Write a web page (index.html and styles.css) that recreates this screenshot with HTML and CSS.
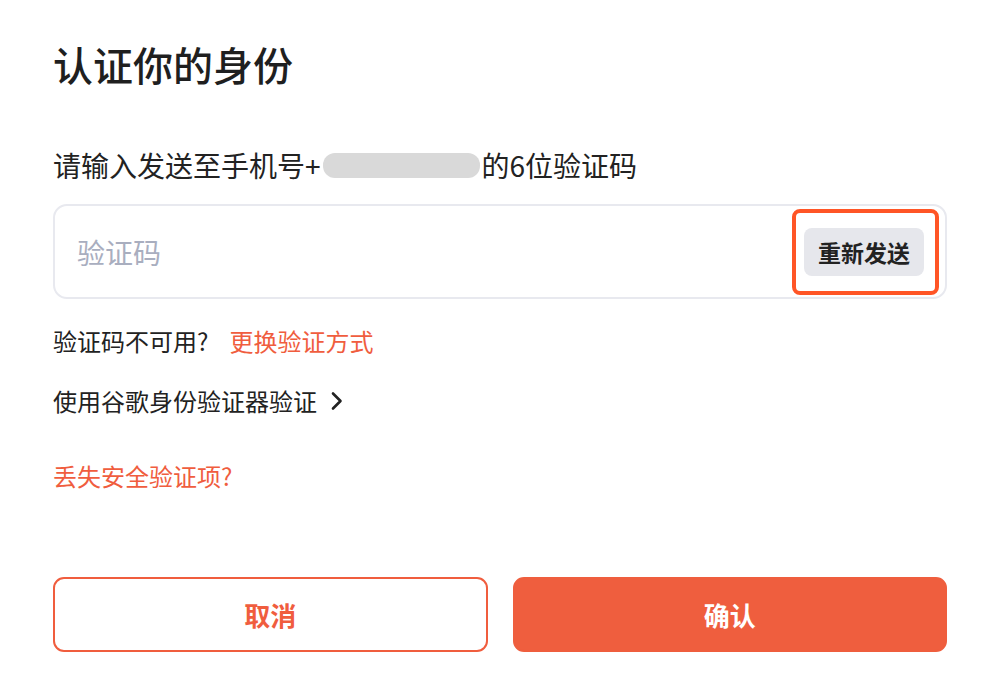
FILE: index.html
```html
<!DOCTYPE html>
<html lang="zh-CN">
<head>
  <meta charset="UTF-8">
  <meta name="viewport" content="width=device-width, initial-scale=1.0">
  <title>认证你的身份</title>
  <link rel="stylesheet" href="styles.css">
</head>
<body>
<div class="container">
  <h2 class="title">认证你的身份</h2>

  <p class="hint">请输入发送至手机号+<span class="masked"></span>的6位验证码</p>

  <div class="code-box">
    <input type="text" class="code-input" placeholder="验证码" maxlength="6">
    <span class="resend-mark">
      <button class="resend">重新发送</button>
    </span>
  </div>

  <p class="row">验证码不可用?<a href="#" class="link switch">更换验证方式</a></p>

  <p class="row google">使用谷歌身份验证器验证
    <svg class="chevron" width="14" height="20" viewBox="0 0 14 20">
      <path d="M3 2.5 L10.5 10 L3 17.5" fill="none" stroke="#222" stroke-width="2.6" stroke-linecap="round" stroke-linejoin="round"/>
    </svg>
  </p>

  <p class="row lost"><a href="#" class="link">丢失安全验证项?</a></p>

  <div class="actions">
    <button class="btn btn-cancel">取消</button>
    <button class="btn btn-ok">确认</button>
  </div>
</div>
</body>
</html>
```

FILE: styles.css
```css
body {
    margin: 0;
    background-color: #ffffff;
    font-family: "Noto Sans CJK SC", "Noto Sans", sans-serif;
    color: #222222;
}

.container {
    width: 894px;
    padding: 40px 53px 0;
}

.title {
    margin: 0;
    font-size: 40px;
    line-height: 48px;
    font-weight: 500;
    color: #1f1f1f;
}

.hint {
    margin: 59px 0 0;
    font-size: 28px;
    line-height: 36px;
    display: flex;
    align-items: center;
}

.masked {
    display: inline-block;
    width: 157px;
    height: 25px;
    border-radius: 12px;
    background-color: #d9d9d9;
    margin: 0 2px 0 2px;
}

.code-box {
    margin-top: 21px;
    height: 95px;
    box-sizing: border-box;
    border: 2px solid #e8e9ef;
    border-radius: 14px;
    display: flex;
    align-items: center;
    padding: 0 6px 0 22px;
}

.code-input {
    flex: 1;
    border: none;
    outline: none;
    font-family: inherit;
    font-size: 28px;
    color: #222222;
    background: transparent;
    padding: 0;
}

.code-input::placeholder {
    color: #a9aebf;
}

.resend-mark {
    border: 4px solid #ff5526;
    border-radius: 8px;
    padding: 15px 11px 15px 8px;
    display: flex;
}

.resend {
    width: 120px;
    height: 48px;
    border: none;
    border-radius: 8px;
    background-color: #e6e7ec;
    font-family: inherit;
    font-size: 23px;
    font-weight: 700;
    color: #222222;
    padding: 0;
    cursor: pointer;
}

.row {
    margin: 0;
    font-size: 24px;
    line-height: 32px;
    display: flex;
    align-items: center;
}

.code-box + .row {
    margin-top: 26px;
}

.google {
    margin-top: 28px;
}

.chevron {
    margin-left: 13px;
}

.lost {
    margin-top: 43px;
}

.link {
    color: #f05d3e;
    text-decoration: none;
}

.switch {
    margin-left: 21px;
}

.actions {
    margin-top: 85px;
    display: flex;
    gap: 25px;
}

.btn {
    flex: 1;
    height: 75px;
    border-radius: 11px;
    font-family: inherit;
    font-size: 26px;
    font-weight: 700;
    cursor: pointer;
}

.btn-cancel {
    background-color: #ffffff;
    border: 2px solid #f05d3e;
    color: #f05d3e;
}

.btn-ok {
    background-color: #ef5e3e;
    border: 2px solid #ef5e3e;
    color: #ffffff;
}
```
